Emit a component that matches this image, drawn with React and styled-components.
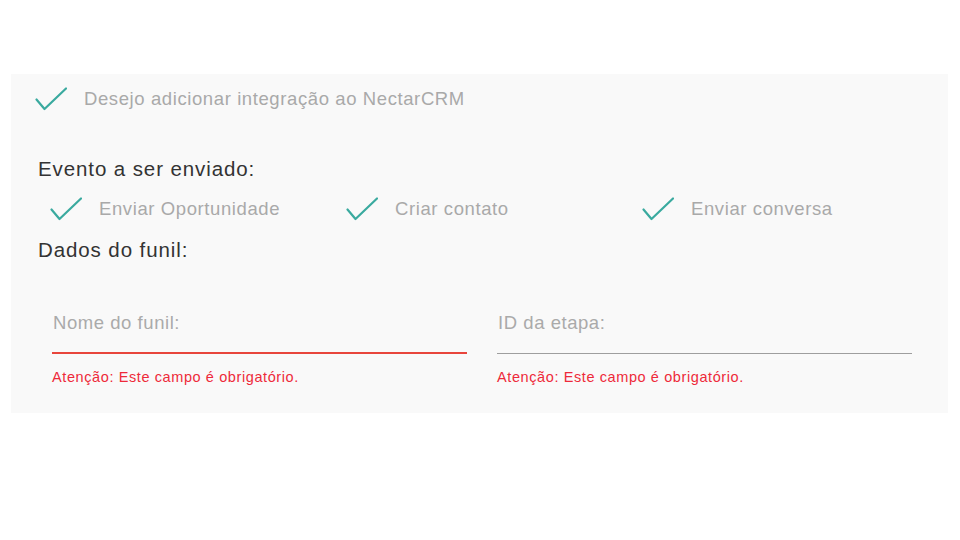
import React from "react";
import styled, { createGlobalStyle } from "styled-components";

const GlobalStyle = createGlobalStyle`
  body {
    margin: 0;
    background: #ffffff;
    font-family: "Liberation Sans", Arial, sans-serif;
  }
`;

const CheckIcon = () => (
  <svg width="32" height="24" viewBox="0 0 32 24" fill="none">
    <path d="M1.5 12.5 L9.5 22 L31 1.5" stroke="#3aaa9f" strokeWidth="2.2" strokeLinecap="round" strokeLinejoin="round" />
  </svg>
);

const events = ["Enviar Oportunidade", "Criar contato", "Enviar conversa"];

const fields = [
  { label: "Nome do funil:", focused: true },
  { label: "ID da etapa:", focused: false },
];

const App = () => {
  return (
    <>
      <GlobalStyle />
      <StPanel>
        <StCheckRow>
          <CheckIcon />
          <StCheckText>Desejo adicionar integração ao NectarCRM</StCheckText>
        </StCheckRow>

        <StTitle $top={46}>Evento a ser enviado:</StTitle>
        <StEvents>
          {events.map((ev) => (
            <StCheckRow key={ev}>
              <CheckIcon />
              <StCheckText>{ev}</StCheckText>
            </StCheckRow>
          ))}
        </StEvents>
        <StTitle $top={17}>Dados do funil:</StTitle>

        <StFields>
          {fields.map((f) => (
            <StField key={f.label}>
              <StLabel>{f.label}</StLabel>
              <StLine $focused={f.focused} />
              <StError>Atenção: Este campo é obrigatório.</StError>
            </StField>
          ))}
        </StFields>
      </StPanel>
    </>
  );
};

export default App;

const StPanel = styled.div`
  margin: 74px 0 0 11px;
  width: 937px;
  height: 339px;
  box-sizing: border-box;
  background: #f9f9f9;
  padding: 12px 0 0 24px;
`;

const StCheckRow = styled.div`
  display: flex;
  align-items: center;
  gap: 17px;
  height: 26px;
`;

const StCheckText = styled.span`
  font-size: 18.5px;
  letter-spacing: 0.6px;
  color: #a9a9a9;
  white-space: nowrap;
`;

const StTitle = styled.div`
  margin-top: ${(p) => p.$top}px;
  margin-left: 3px;
  font-size: 20.5px;
  letter-spacing: 0.9px;
  color: #333333;
  line-height: 22px;
`;

const StEvents = styled.div`
  display: grid;
  grid-template-columns: 296px 296px 296px;
  margin: 16px 0 0 15px;
`;

const StFields = styled.div`
  display: grid;
  grid-template-columns: 415px 415px;
  column-gap: 30px;
  margin: 52px 0 0 17px;
`;

const StField = styled.div`
  display: flex;
  flex-direction: column;
`;

const StLabel = styled.div`
  font-size: 18.5px;
  letter-spacing: 0.55px;
  color: #aaaaaa;
  line-height: 20px;
  padding-left: 1px;
`;

const StLine = styled.div`
  margin-top: ${(p) => (p.$focused ? "19px" : "20px")};
  height: ${(p) => (p.$focused ? "2px" : "1px")};
  background: ${(p) => (p.$focused ? "#e8453c" : "#9e9e9e")};
`;

const StError = styled.div`
  margin-top: 15px;
  font-size: 14.5px;
  letter-spacing: 0.6px;
  color: #ee2a3a;
  line-height: 16px;
`;
